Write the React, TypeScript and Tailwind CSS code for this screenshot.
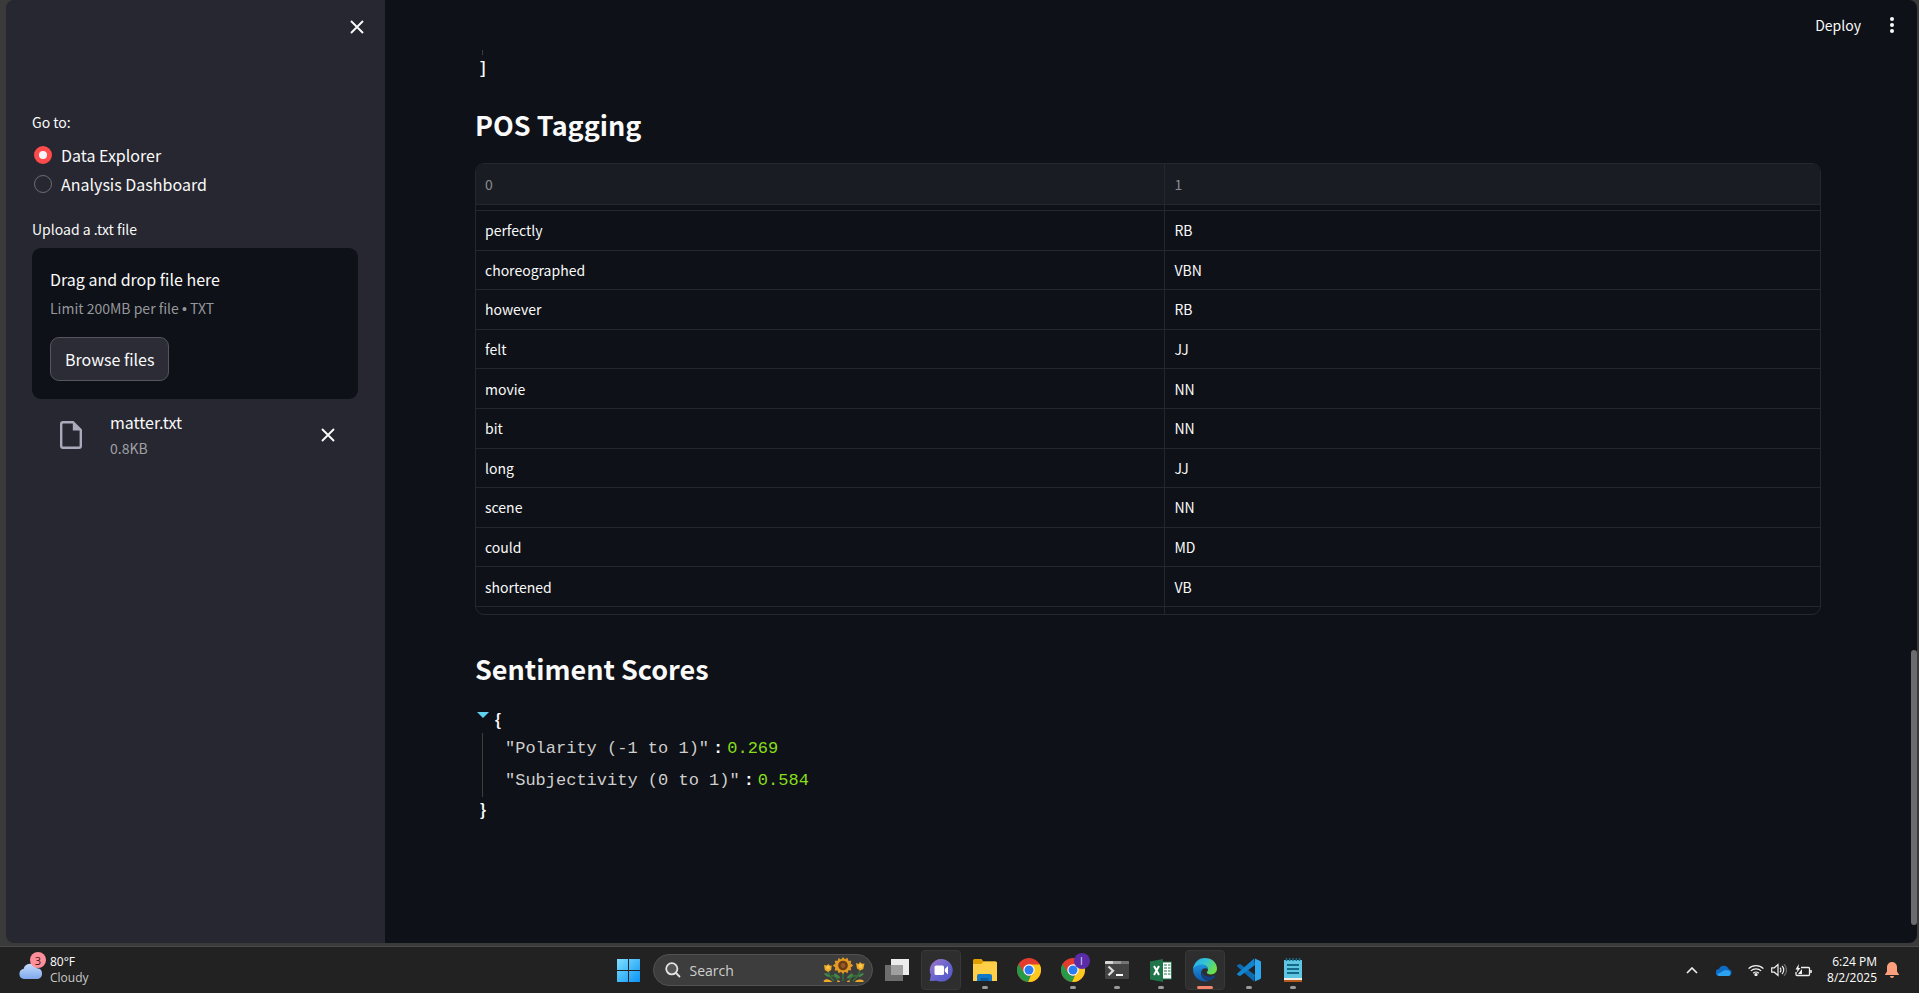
import type { ReactNode } from "react";

const SANS = "font-['Noto_Sans_CJK_SC','Noto_Sans',sans-serif]";
const UI = "font-['Open_Sans','Noto_Sans',sans-serif]";
const BRACES = "font-['Noto_Sans_Mono_CJK_SC','DejaVu_Sans_Mono',monospace]";
const MONO = "font-['Liberation_Mono','DejaVu_Sans_Mono',monospace]";

const tags: [string, string][] = [
  ["perfectly", "RB"],
  ["choreographed", "VBN"],
  ["however", "RB"],
  ["felt", "JJ"],
  ["movie", "NN"],
  ["bit", "NN"],
  ["long", "JJ"],
  ["scene", "NN"],
  ["could", "MD"],
  ["shortened", "VB"],
];

function CloseIcon() {
  return (
    <svg className="size-[14px]" viewBox="0 0 14 14" fill="none" stroke="#fafafa" strokeWidth="1.9">
      <path d="M1 1l12 12M13 1L1 13" />
    </svg>
  );
}

function Sidebar() {
  return (
    <aside className="flex w-[379px] shrink-0 flex-col bg-[#262730] pb-6 text-[#fafafa]">
      <div className="flex h-[54px] items-center justify-end pr-[14px]">
        <button type="button" aria-label="Close sidebar" className="flex size-[28px] items-center justify-center">
          <CloseIcon />
        </button>
      </div>
      <div className="pl-[26px] pr-[27px]">
        <fieldset className="mt-[57px]">
          <legend className="text-[14px] leading-[22px]">Go to:</legend>
          <div className="mt-[9px] flex flex-col gap-[3px] pl-[2px]">
            <label className="flex items-center gap-[9px] text-[16px] leading-[26px]">
              <input
                type="radio"
                name="page"
                defaultChecked
                className="size-[18px] appearance-none rounded-full border border-[#6b6c75] checked:border-[5px] checked:border-[#ff4b4b] checked:bg-[#f4f4fa]"
              />
              Data Explorer
            </label>
            <label className="flex items-center gap-[9px] text-[16px] leading-[26px]">
              <input
                type="radio"
                name="page"
                className="size-[18px] appearance-none rounded-full border border-[#6b6c75] checked:border-[5px] checked:border-[#ff4b4b] checked:bg-[#f4f4fa]"
              />
              Analysis Dashboard
            </label>
          </div>
        </fieldset>
        <p className="mt-[21px] text-[14px] leading-[22px]">Upload a .txt file</p>
        <section aria-label="File upload" className="mt-[8px] rounded-[9px] bg-[#0e1117] p-[18px]">
          <p className="text-[16px] leading-[26px]">Drag and drop file here</p>
          <p className="mt-[4px] text-[14px] leading-[24px] text-[#96979b]">
            Limit 200MB per file <span className="font-['Liberation_Sans',sans-serif]">•</span> TXT
          </p>
          <button
            type="button"
            className="mt-[16px] h-[44px] rounded-[9px] border border-[#54555d] bg-[#2b2c36] px-[14px] text-[16px] leading-[42px]"
          >
            Browse files
          </button>
        </section>
        <div className="mt-[10px] flex items-center pl-[28px] pr-[23px]">
          <svg className="h-[28px] w-[22px]" viewBox="0 0 22 28" fill="none">
            <path
              d="M13 1.2H3a1.8 1.8 0 0 0-1.8 1.8v22A1.8 1.8 0 0 0 3 26.8h16a1.8 1.8 0 0 0 1.8-1.8V9z"
              stroke="#a9aabb"
              strokeWidth="2.400"
            />
            <path d="M12.800 1l8.200 8.500h-8.200z" fill="#a9aabb" />
          </svg>
          <div className="ml-[28px] flex-1">
            <p className="text-[16px] leading-[26px]">matter.txt</p>
            <p className="text-[14px] leading-[26px] text-[#a0a1a6]">0.8KB</p>
          </div>
          <button type="button" aria-label="Remove file">
            <CloseIcon />
          </button>
        </div>
      </div>
    </aside>
  );
}

function PosTable() {
  const cell = "border-b border-[#25272c] px-[9px] align-middle";
  return (
    <div className="mt-[19px] overflow-hidden rounded-[9px] border border-[#25272c]">
      <table className="h-[450px] w-full table-fixed border-separate border-spacing-0 text-left text-[14px] leading-[22px] text-[#fafafa]">
        <thead>
          <tr className="h-[41px] bg-[#1a1c24] text-[#8a8b90]">
            <th className={`${cell} w-[51.3%] border-r font-normal`}>0</th>
            <th className={`${cell} font-normal`}>1</th>
          </tr>
        </thead>
        <tbody>
          <tr className="h-[6px]">
            <td className="border-b border-r border-[#25272c]" />
            <td className="border-b border-[#25272c]" />
          </tr>
          {tags.map(([word, tag]) => (
            <tr key={word}>
              <td className={`${cell} border-r`}>{word}</td>
              <td className={cell}>{tag}</td>
            </tr>
          ))}
          <tr className="h-[7px]">
            <td className="border-r border-[#25272c]" />
            <td />
          </tr>
        </tbody>
      </table>
    </div>
  );
}

function JsonLine({ name, value }: { name: string; value: string }) {
  return (
    <div className={`${MONO} flex h-[32px] items-center pl-[22px] text-[17px]`}>
      <span className="text-[#cecece]">"{name}"</span>
      <span className="ml-[4px] font-bold text-white">:</span>
      <span className="ml-[4px] text-[#86de1b]">{value}</span>
    </div>
  );
}

function Main() {
  return (
    <main className="relative flex min-w-0 flex-1 flex-col bg-[#0e1117] text-[#fafafa]">
      <header className="flex h-[50px] shrink-0 items-center justify-end gap-[25px] pr-[20px]">
        <button type="button" className="text-[14px] leading-[22px]">
          Deploy
        </button>
        <button type="button" aria-label="Menu" className="flex h-[20px] w-[11px] items-center justify-center">
          <svg className="h-[16px] w-[4px]" viewBox="0 0 4 16" fill="#fafafa">
            <circle cx="2" cy="2" r="2" />
            <circle cx="2" cy="8" r="2" />
            <circle cx="2" cy="14" r="2" />
          </svg>
        </button>
      </header>
      <div className="pl-[90px] pr-[96px]">
        <div className={`${BRACES} pl-[4px] text-[16px] font-bold`}>
          <div className="ml-[3px] h-[5px] w-px bg-[#3d3e38]" />
          <div className="leading-[24px]">]</div>
        </div>
        <h3 className="mt-[27px] text-[27px] font-bold leading-[38px]">POS Tagging</h3>
        <PosTable />
        <h3 className="mt-[35px] text-[27px] font-bold leading-[38px]">Sentiment Scores</h3>
        <div className={`${BRACES} mt-[18px] text-[16px]`}>
          <div className="flex h-[27px] gap-[5px] pl-[2px]">
            <button type="button" aria-label="Collapse" className="mt-[6px] h-[6px] w-[12px]">
              <svg className="block h-[6px] w-[12px]" viewBox="0 0 12 6">
                <path d="M0 0h12L6 6z" fill="#5fd3ee" />
              </svg>
            </button>
            <span className="font-bold leading-[26px]">{"{"}</span>
          </div>
          <div className="ml-[7px] border-l border-[#3d3e38]">
            <JsonLine name="Polarity (-1 to 1)" value="0.269" />
            <JsonLine name="Subjectivity (0 to 1)" value="0.584" />
          </div>
          <div className="pl-[4px] font-bold leading-[24px]">{"}"}</div>
        </div>
      </div>
      <div className="absolute bottom-[18px] right-0 h-[275px] w-[6px] rounded-full bg-[#6b6c70]" />
    </main>
  );
}

function Slot({
  children,
  active,
  run,
  label,
}: {
  children: ReactNode;
  active?: boolean;
  run?: "idle" | "focus";
  label: string;
}) {
  return (
    <button type="button" aria-label={label} className="relative flex h-[46px] w-[44px] items-center justify-center">
      <span
        className={
          active
            ? "flex size-[40px] items-center justify-center rounded-[4px] border border-[#383838] bg-[#2e2e2e]"
            : "flex size-[40px] items-center justify-center"
        }
      >
        {children}
      </span>
      {run === "idle" && <span className="absolute bottom-[4px] left-[19px] h-[3px] w-[6px] rounded-full bg-[#9a9a9a]" />}
      {run === "focus" && (
        <span className="absolute bottom-[4px] left-[14px] h-[3px] w-[16px] rounded-full bg-[#f08468]" />
      )}
    </button>
  );
}

function Chrome() {
  return (
    <svg className="size-[24px]" viewBox="0 0 24 24">
      <circle cx="12" cy="12" r="12" fill="#e33b2e" />
      <path d="M12 6.500h10.700A12 12 0 0 1 11.500 24l5.300-9.200z" fill="#fdc91d" />
      <path d="M1.600 6L7.200 14.800A5.500 5.500 0 0 0 14 17.200L11.500 24A12 12 0 0 1 1.600 6z" fill="#269a47" />
      <path d="M14.200 16.800l2.600-2L12.500 24h-1.300z" fill="#fdc91d" />
      <circle cx="12" cy="12" r="5.700" fill="#fff" />
      <circle cx="12" cy="12" r="4.500" fill="#2a7cf0" />
    </svg>
  );
}

function Sunflowers() {
  return (
    <svg className="h-[26px] w-[42px]" viewBox="0 0 42 26">
      <g fill="none" stroke="#35763a" strokeWidth="1.300">
        <path d="M20 14v10M5 12c0 6 3 9 6 12M37 11c0 6-3 9-7 13M15 24c-1-4-4-6-7-5M26 24c1-4 4-6 8-5" />
      </g>
      <g fill="#43884a">
        <ellipse cx="14" cy="19" rx="3.500" ry="1.300" transform="rotate(35 14 19)" />
        <ellipse cx="27" cy="19" rx="3.500" ry="1.300" transform="rotate(-35 27 19)" />
        <ellipse cx="4" cy="18" rx="3" ry="1.200" transform="rotate(30 4 18)" />
        <ellipse cx="38" cy="18" rx="3" ry="1.200" transform="rotate(-30 38 18)" />
      </g>
      <path
        d="M20 0l1.900 2.300L24.500.8l.8 2.900 3 0-.6 2.900 2.600 1.900-2.600 1.900.6 2.900-3 0-.8 2.900-2.600-1.500L20 17l-1.900-2.200-2.600 1.500-.8-2.900-3 0 .6-2.900-2.600-1.900 2.600-1.900-.6-2.900 3 0 .8-2.900 2.600 1.500z"
        fill="#e29a22"
      />
      <g fill="#eda928">
        <path d="M1 8l2.500.5L5.500 7l1.500 1.800L8.800 8.500l-.6 4.500L5 15l-3.200-2zM33 6l2.500 1L37 5l2 1.800L41.500 6.500l-1.200 5.500-3 1.500-3.300-2z" />
        <path d="M.5 24c2-3 6-2 9 1H1zM32 25c2-3 6-3 9-1l-1 1z" />
        <path d="M14 25c0-2 3-2 3 0zM24 25c0-2 3-2 3 0z" />
      </g>
      <circle cx="20" cy="8.500" r="4.800" fill="#6b3b14" />
      <circle cx="20" cy="8.500" r="2.400" fill="#96582a" />
      <g fill="#fbc84a">
        <circle cx="5" cy="10.500" r="1.800" />
        <circle cx="37.500" cy="9" r="2" />
      </g>
    </svg>
  );
}

function Taskbar() {
  return (
    <footer
      className={`${UI} grid h-[47px] shrink-0 grid-cols-[1fr_auto_1fr] border-t border-[#4a4a4a] bg-[#222222] text-white`}
    >
      <button type="button" className="flex items-center pl-[18px] text-left">
        <span className="relative mb-[4px] h-[32px] w-[32px]">
          <svg className="absolute left-[1px] top-[11px] h-[16px] w-[24px]" viewBox="0 0 24 16">
            <defs>
              <linearGradient id="cloud" x1="0" y1="0" x2="0" y2="1">
                <stop offset="0" stopColor="#c4dcfb" />
                <stop offset="1" stopColor="#7fa8ec" />
              </linearGradient>
            </defs>
            <path d="M5 16a5 5 0 0 1-.5-9.900A7 7 0 0 1 17.800 5.300 5.400 5.400 0 0 1 18.700 16z" fill="url(#cloud)" />
          </svg>
          <span className="absolute left-[12px] top-0 flex size-[16px] items-center justify-center rounded-full bg-[#ff8f9a] text-[11px] leading-none text-[#3a1216]">
            3
          </span>
        </span>
        <span className="text-[12px] leading-[16px]">
          <span className="block">80°F</span>
          <span className="block text-[#c8c8c8]">Cloudy</span>
        </span>
      </button>

      <div className="flex items-center pl-[2px]">
        <Slot label="Start">
          <svg className="size-[23px]" viewBox="0 0 23 23">
            <defs>
              <linearGradient id="win" x1="0" y1="0" x2="1" y2="1">
                <stop offset="0" stopColor="#7fe0ff" />
                <stop offset="1" stopColor="#0a93f5" />
              </linearGradient>
            </defs>
            <path d="M0 0h11v11H0zM12 0h11v11H12zM0 12h11v11H0zM12 12h11v11H12z" fill="url(#win)" />
          </svg>
        </Slot>
        <label className="mx-[2px] flex h-[32px] w-[220px] items-center rounded-full border border-[#525252] bg-[#3d3d3d] pl-[11px] pr-[7px]">
          <svg
            className="size-[16px] shrink-0"
            viewBox="0 0 16 16"
            fill="none"
            stroke="#e4e4e4"
            strokeWidth="1.800"
          >
            <circle cx="6.800" cy="6.800" r="5.600" fill="#555" />
            <path d="M11 11l4 4" />
          </svg>
          <input
            type="text"
            aria-label="Search"
            placeholder="Search"
            className="ml-[9px] min-w-0 flex-1 bg-transparent text-[14px] outline-none placeholder:text-[#cfcfcf]"
          />
          <Sunflowers />
        </label>
        <Slot label="Task view">
          <svg className="h-[22px] w-[24px]" viewBox="0 0 24 22">
            <path d="M6 0h18v16H6z" fill="#ececec" />
            <path d="M0 6h18v16H0z" fill="#6d6d6d" />
            <path d="M6 6h12v10H6z" fill="#a0a0a0" />
          </svg>
        </Slot>
        <Slot label="Chat" active>
          <svg className="size-[24px]" viewBox="0 0 24 24">
            <defs>
              <linearGradient id="chat" x1="0" y1="0" x2="1" y2="1">
                <stop offset="0" stopColor="#a275c6" />
                <stop offset=".5" stopColor="#6a66cf" />
                <stop offset="1" stopColor="#5158c8" />
              </linearGradient>
            </defs>
            <path d="M12 1a11.300 11.300 0 1 1-4 21.700L.8 23l1-6A11.300 11.300 0 0 1 12 1z" fill="url(#chat)" />
            <rect x="5.500" y="7.500" width="9.500" height="9.500" rx="1.500" fill="#fff" />
            <path d="M15.800 11l3.200-3v8.500l-3.200-3z" fill="#fff" />
          </svg>
        </Slot>
        <Slot label="File Explorer" run="idle">
          <svg className="h-[22px] w-[24px]" viewBox="0 0 24 22">
            <path d="M0 1.500A1.500 1.500 0 0 1 1.500 0h7L10.500 2.500H22.500A1.500 1.500 0 0 1 24 4v4H0z" fill="#e0a100" />
            <path d="M0 5h8.500l2-2.500h12A1.500 1.500 0 0 1 24 4v18H0z" fill="#ffcf48" />
            <path d="M4 22v-5a2 2 0 0 1 2-2h11a2 2 0 0 1 2 2v5z" fill="#1177c9" />
            <path d="M7.500 19h8v3h-8z" fill="#0b5ca3" />
          </svg>
        </Slot>
        <Slot label="Chrome">
          <Chrome />
        </Slot>
        <Slot label="Chrome, profile I" run="idle">
          <span className="relative">
            <Chrome />
            <span className="absolute -right-[5px] -top-[5px] flex size-[16px] items-center justify-center rounded-full bg-[#5a2ca8] text-[10px] leading-none text-[#e0d4f5]">
              I
            </span>
          </span>
        </Slot>
        <Slot label="Terminal" run="idle">
          <svg className="h-[18px] w-[24px]" viewBox="0 0 24 18">
            <rect width="24" height="18" rx="1" fill="#434343" />
            <path d="M0 3V1a1 1 0 0 1 1-1h7v3z" fill="#d5d5d5" />
            <path d="M8 0h8v3H8z" fill="#9a9a9a" />
            <path d="M16 0h7a1 1 0 0 1 1 1v2h-8z" fill="#737373" />
            <path d="M3.500 5.500L8 9.700l-4.500 4.500" fill="none" stroke="#dcdcdc" strokeWidth="2.300" />
            <path d="M11 13h7v2h-7z" fill="#fff" />
          </svg>
        </Slot>
        <Slot label="Excel" run="idle">
          <svg className="h-[23px] w-[22px]" viewBox="0 0 22 23">
            <path d="M12 3h9.500v17H12z" fill="#fff" stroke="#20744a" />
            <path
              d="M14 6h3M14 9h3M14 12h3M14 15h3M18 6h2.500M18 9h2.500M18 12h2.500M18 15h2.500"
              stroke="#20744a"
              strokeWidth="1.200"
            />
            <path d="M0 2.500L13 0v23L0 20.500z" fill="#20744a" />
            <path d="M4 7l5 9M9 7l-5 9" stroke="#fff" strokeWidth="2" />
          </svg>
        </Slot>
        <Slot label="Edge" active run="focus">
          <svg className="size-[24px]" viewBox="0 0 24 24">
            <defs>
              <linearGradient id="edgeTop" x1="0" y1="0" x2="1" y2=".5">
                <stop offset="0" stopColor="#27a8e8" />
                <stop offset=".5" stopColor="#33c3d8" />
                <stop offset="1" stopColor="#6be04a" />
              </linearGradient>
              <linearGradient id="edgeSide" x1="0" y1="0" x2="0" y2="1">
                <stop offset="0" stopColor="#1f93df" />
                <stop offset="1" stopColor="#0b57ad" />
              </linearGradient>
            </defs>
            <path
              d="M0 11.500C.5 4.800 5.500 0 12 0c7 0 12 4.800 12 10.500 0 3.500-2.600 5.900-6 5.900-2.600 0-4.200-1-4.200-1.900 0-.6 1.200-1.200 1.200-3C15 9 12.700 7 9.500 7 5 7 1.500 9.500 0 11.500z"
              fill="url(#edgeTop)"
            />
            <path
              d="M0 12C.8 8.800 4.400 6.500 8.500 6.500c3.500 0 6.500 2 6.500 5-2-2.500-7-1.500-7 3.500 0 4.500 4 8 8.500 7.500A12 12 0 0 1 0 12z"
              fill="url(#edgeSide)"
            />
            <path
              d="M8.700 12.500C7 18 12.500 22.500 17 22.300c2-.5 4-2 5.400-4.200.3-.5-.1-.8-.6-.5-5 2.500-12.500 1-13.100-5.100z"
              fill="#12418b"
            />
          </svg>
        </Slot>
        <Slot label="Visual Studio Code" run="idle">
          <svg className="size-[24px]" viewBox="0 0 24 24">
            <path
              d="M2.200 6.200L.4 7.100a.9.900 0 0 0-.1 1.300L17 23.500l1-6.500L3.500 6.200a1 1 0 0 0-1.300 0z"
              fill="#0d6cb2"
            />
            <path
              d="M2.200 17.800l-1.800-.9a.9.900 0 0 1-.1-1.300L17 .5 18 7 3.500 17.800a1 1 0 0 1-1.300 0z"
              fill="#1284d0"
            />
            <path
              d="M17.200.2L23.300 3a1.200 1.200 0 0 1 .7 1v16a1.200 1.200 0 0 1-.7 1l-6.100 2.800c.5-.3.800-.7.800-1.300v-21c0-.6-.3-1-.8-1.300z"
              fill="#2fa7ee"
            />
          </svg>
        </Slot>
        <Slot label="Notepad" run="idle">
          <svg className="h-[24px] w-[18px]" viewBox="0 0 18 24">
            <path d="M0 2h18v18H0z" fill="#5fc6e2" />
            <path d="M0 20h18v2H0z" fill="#f2efe9" />
            <path d="M0 22h18v2H0z" fill="#b5591c" />
            <path d="M2.500 0v3M5.700 0v3M9 0v3M12.300 0v3M15.500 0v3" stroke="#156a8a" strokeWidth="1.500" />
            <path d="M3 7h12M3 11h12M3 15h12" stroke="#156a8a" strokeWidth="2" />
          </svg>
        </Slot>
      </div>

      <div className="flex items-center justify-end pr-[20px]">
        <svg className="h-[7px] w-[12px]" viewBox="0 0 12 7" fill="none" stroke="#f0f0f0" strokeWidth="1.600">
          <path d="M1 6l5-5 5 5" />
        </svg>
        <svg className="ml-[18px] h-[11px] w-[16px]" viewBox="0 0 16 11">
          <path d="M3.500 11A3.500 3.500 0 0 1 3 4a5.200 5.200 0 0 1 9.700.3A3.400 3.400 0 0 1 12.700 11z" fill="#0f6cc4" />
          <path d="M1 9.500L8.500 5.200l3.300.1A3 3 0 0 1 12.700 11H3.500A3.400 3.400 0 0 1 1 9.500z" fill="#2ba3f0" />
        </svg>
        <svg
          className="ml-[16px] h-[12px] w-[16px]"
          viewBox="0 0 16 12"
          fill="none"
          stroke="#f0f0f0"
          strokeWidth="1.300"
        >
          <path d="M.6 4.600a10.500 10.500 0 0 1 14.800 0M2.900 6.900a7.200 7.200 0 0 1 10.200 0M5.200 9.200a4 4 0 0 1 5.600 0" />
          <circle cx="8" cy="10.600" r="1" fill="#f0f0f0" />
        </svg>
        <svg
          className="ml-[7px] h-[14px] w-[16px]"
          viewBox="0 0 16 14"
          fill="none"
          stroke="#f0f0f0"
          strokeWidth="1.200"
        >
          <path d="M.7 4.800h2.600L7 1.500v11L3.300 9.200H.7z" />
          <path d="M9 4.800a3 3 0 0 1 0 4.400M11 3a5.500 5.500 0 0 1 0 8" />
          <path d="M13 1.200a8 8 0 0 1 0 11.600" stroke="#6a6a6a" />
        </svg>
        <svg
          className="ml-[8px] h-[13px] w-[17px]"
          viewBox="0 0 17 13"
          fill="none"
          stroke="#f0f0f0"
          strokeWidth="1.300"
        >
          <path d="M6 3.500h7.500a1 1 0 0 1 1 1v6a1 1 0 0 1-1 1H2a1 1 0 0 1-1-1V8" />
          <path d="M16 6v3" strokeWidth="1.600" />
          <path d="M3.800 0L.5 5.500h2L1.500 9l4-5h-2z" fill="#f0f0f0" stroke="none" />
          <path d="M3 10l4-5v5z" fill="#f0f0f0" stroke="none" />
        </svg>
        <p className="ml-[15px] text-right text-[12px] leading-[16px]">
          6:24 PM
          <br />
          8/2/2025
        </p>
        <svg className="ml-[8px] h-[16px] w-[14px]" viewBox="0 0 14 16" fill="#fc9f7c">
          <path d="M7 0a5 5 0 0 1 5 5v4.500l2 3v.5H0v-.5l2-3V5a5 5 0 0 1 5-5zM5 14h4a2 2 0 0 1-4 0z" />
        </svg>
      </div>
    </footer>
  );
}

export default function App() {
  return (
    <div className={`${SANS} flex min-h-screen flex-col bg-[#3a3a3a]`}>
      <div className="mb-[3px] ml-[6px] mr-[2px] flex flex-1 overflow-hidden rounded-[8px]">
        <Sidebar />
        <Main />
      </div>
      <Taskbar />
    </div>
  );
}
